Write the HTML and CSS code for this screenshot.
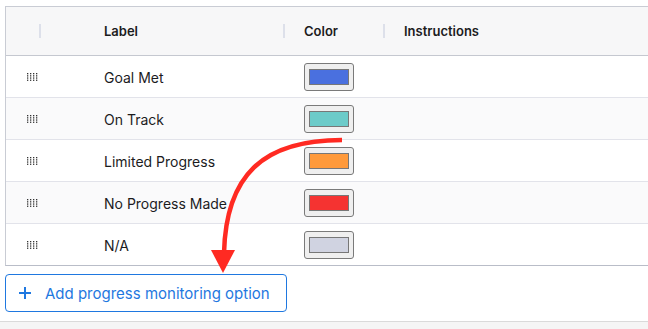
FILE: index.html
```html
<!DOCTYPE html>
<html lang="en">
<head>
    <meta charset="UTF-8">
    <meta name="viewport" content="width=device-width, initial-scale=1.0">
    <title>Progress monitoring options</title>
    <link rel="stylesheet" href="styles.css">
</head>
<body>
    <div class="page">
        <div class="options-table">
            <div class="row head">
                <div class="cell handle-col sep"></div>
                <div class="cell label-col sep">Label</div>
                <div class="cell color-col sep">Color</div>
                <div class="cell instr-col">Instructions</div>
            </div>

            <div class="row">
                <div class="cell handle-col"><svg class="grip" width="11" height="8"><use href="#dots"/></svg></div>
                <div class="cell label-col">Goal Met</div>
                <div class="cell color-col"><span class="swatch"><span class="chip" style="background:#4a70df"></span></span></div>
                <div class="cell instr-col"></div>
            </div>
            <div class="row alt">
                <div class="cell handle-col"><svg class="grip" width="11" height="8"><use href="#dots"/></svg></div>
                <div class="cell label-col">On Track</div>
                <div class="cell color-col"><span class="swatch"><span class="chip" style="background:#6ccbc9"></span></span></div>
                <div class="cell instr-col"></div>
            </div>
            <div class="row">
                <div class="cell handle-col"><svg class="grip" width="11" height="8"><use href="#dots"/></svg></div>
                <div class="cell label-col">Limited Progress</div>
                <div class="cell color-col"><span class="swatch"><span class="chip" style="background:#ff9a3b"></span></span></div>
                <div class="cell instr-col"></div>
            </div>
            <div class="row alt">
                <div class="cell handle-col"><svg class="grip" width="11" height="8"><use href="#dots"/></svg></div>
                <div class="cell label-col">No Progress Made</div>
                <div class="cell color-col"><span class="swatch"><span class="chip" style="background:#f53331"></span></span></div>
                <div class="cell instr-col"></div>
            </div>
            <div class="row last">
                <div class="cell handle-col"><svg class="grip" width="11" height="8"><use href="#dots"/></svg></div>
                <div class="cell label-col">N/A</div>
                <div class="cell color-col"><span class="swatch"><span class="chip" style="background:#d0d3e1"></span></span></div>
                <div class="cell instr-col"></div>
            </div>
        </div>

        <button class="add-btn">
            <svg width="14" height="14" viewBox="0 0 14 14"><path d="M7 1v12M1 7h12" stroke="#1f78e0" stroke-width="2"/></svg>
            <span>Add progress monitoring option</span>
        </button>
    </div>
    <div class="footer-strip"></div>

    <svg width="0" height="0" class="defs">
        <defs>
            <g id="dots" fill="#333">
                <rect x="0" y="0" width="1.3" height="1.3"/><rect x="3" y="0" width="1.3" height="1.3"/><rect x="6" y="0" width="1.3" height="1.3"/><rect x="9" y="0" width="1.3" height="1.3"/>
                <rect x="0" y="2.2" width="1.3" height="1.3"/><rect x="3" y="2.2" width="1.3" height="1.3"/><rect x="6" y="2.2" width="1.3" height="1.3"/><rect x="9" y="2.2" width="1.3" height="1.3"/>
                <rect x="0" y="4.4" width="1.3" height="1.3"/><rect x="3" y="4.4" width="1.3" height="1.3"/><rect x="6" y="4.4" width="1.3" height="1.3"/><rect x="9" y="4.4" width="1.3" height="1.3"/>
                <rect x="0" y="6.6" width="1.3" height="1.3"/><rect x="3" y="6.6" width="1.3" height="1.3"/><rect x="6" y="6.6" width="1.3" height="1.3"/><rect x="9" y="6.6" width="1.3" height="1.3"/>
            </g>
        </defs>
    </svg>

    <svg class="arrow" width="648" height="329" viewBox="0 0 648 329">
        <path d="M342 140 C 262 140, 226 176, 224 253" fill="none" stroke="#ff2a22" stroke-width="4.5"/>
        <polygon points="211,250 235,250 223,273" fill="#ff2a22"/>
    </svg>
</body>
</html>
```

FILE: styles.css
```css
body {
    margin: 0;
    font-family: Inter, "Liberation Sans", sans-serif;
    color: #1c1c1e;
    background: #ffffff;
    width: 648px;
    height: 329px;
    overflow: hidden;
    position: relative;
}

.page {
    padding: 6px 0 0 5px;
    height: 321px;
    box-sizing: border-box;
}

.options-table {
    width: 643px;
    border-top: 1px solid #c9ccd4;
    border-left: 1px solid #c9ccd4;
    border-bottom: 1px solid #b9bdc8;
}

.row {
    display: grid;
    grid-template-columns: 35px 244px 100px 1fr;
    height: 42px;
    box-sizing: border-box;
    border-bottom: 1px solid #e2e3ea;
    font-size: 14px;
}

.row.alt {
    background: #fafafb;
}

.row.last {
    height: 41px;
    border-bottom: none;
}

.row.head {
    height: 49px;
    background: #f7f7f8;
    border-bottom: 1px solid #c5c8d0;
    font-size: 13px;
    font-weight: 600;
}

.cell {
    display: flex;
    align-items: center;
    position: relative;
}

.row:not(.head) .label-col {
    padding-top: 2px;
}

.head .sep::after {
    content: "";
    position: absolute;
    right: 0;
    top: 17px;
    width: 2px;
    height: 14px;
    background: #dde0ea;
}

.label-col {
    padding-left: 63px;
}

.color-col {
    padding-left: 19px;
}

.instr-col {
    padding-left: 19px;
}

.grip {
    margin-left: 21px;
}

.defs {
    position: absolute;
}

.swatch {
    display: flex;
    align-items: center;
    justify-content: center;
    width: 50px;
    height: 28px;
    box-sizing: border-box;
    background: #efefef;
    border: 1px solid #7a7a7a;
    border-radius: 3px;
}

.chip {
    width: 40px;
    height: 16px;
    box-sizing: border-box;
    border: 1px solid #777;
}

.add-btn {
    margin-top: 8px;
    display: flex;
    align-items: center;
    gap: 13px;
    width: 282px;
    height: 38px;
    padding: 0 0 0 12px;
    background: #ffffff;
    border: 1px solid #1f78e0;
    border-radius: 4px;
    color: #1f78e0;
    font-family: Inter, "Liberation Sans", sans-serif;
    font-size: 15px;
    cursor: pointer;
}

.footer-strip {
    height: 8px;
    border-top: 1px solid #dadada;
    background: #f5f5f5;
}

.arrow {
    position: absolute;
    left: 0;
    top: 0;
    pointer-events: none;
}
```
